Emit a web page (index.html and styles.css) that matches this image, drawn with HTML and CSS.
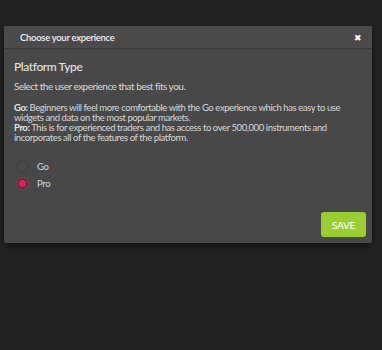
FILE: index.html
```html
<!DOCTYPE html>
<html>
<head>
<meta charset="utf-8">
<link rel="stylesheet" href="styles.css">
</head>
<body>
<div class="dialog">
  <div class="header">
    <span class="title">Choose your experience</span>
    <span class="close">✖</span>
  </div>
  <div class="body">
    <h2 class="heading">Platform Type</h2>
    <p class="intro">Select the user experience that best fits you.</p>
    <p class="desc"><b>Go:</b> Beginners will feel more comfortable with the Go experience which has easy to use widgets and data on the most popular markets.<br><b>Pro:</b> This is for experienced traders and has access to over 500,000 instruments and incorporates all of the features of the platform.</p>
    <div class="options">
      <label class="option"><span class="radio"></span><span>Go</span></label>
      <label class="option"><span class="radio checked"></span><span>Pro</span></label>
    </div>
    <div class="footer"><button class="save">SAVE</button></div>
  </div>
</div>
</body>
</html>
```
FILE: styles.css
```css
html, body { margin: 0; padding: 0; }
body {
  background: #232323;
  width: 382px;
  height: 350px;
  font-family: Lato, "Liberation Sans", sans-serif;
  color: #d8d8d8;
  padding-top: 26px;
  box-sizing: border-box;
}
.dialog {
  margin-left: 4px;
  width: 368px;
  background: #484848;
  box-shadow: 0 3px 8px rgba(0,0,0,0.5);
  border-radius: 2px;
}
.header {
  height: 22px;
  border-bottom: 1px solid #3a3a3a;
  display: flex;
  align-items: center;
  justify-content: space-between;
  padding: 0 10px 0 16px;
  background: #4a4a4a;
}
.title {
  font-size: 9.5px;
  letter-spacing: -0.3px;
  font-weight: 600;
  color: #f0f0f0;
}
.close {
  font-size: 9px;
  color: #fff;
}
.body {
  padding: 10px 6px 6px 10px;
}
.heading {
  margin: 0;
  font-size: 12px;
  letter-spacing: -0.4px;
  font-weight: 500;
  color: #e2e2e2;
  line-height: 16px;
}
.intro {
  margin: 5px 0 0;
  font-size: 10px;
  letter-spacing: -0.5px;
  line-height: 12px;
}
.desc {
  margin: 11px 4px 0 0;
  font-size: 9.5px;
  letter-spacing: -0.42px;
  line-height: 10px;
}
.desc b { font-weight: 700; color: #e6e6e6; }
.options {
  margin-top: 17px;
  display: flex;
  flex-direction: column;
  gap: 4px;
}
.option {
  display: flex;
  align-items: center;
  gap: 8px;
  font-size: 9.5px;
  letter-spacing: -0.3px;
  height: 13px;
  padding-left: 2px;
}
.radio {
  width: 11px;
  height: 11px;
  border: 1px solid #3c3c3c;
  border-radius: 50%;
  box-sizing: content-box;
  display: inline-block;
  position: relative;
}
.radio.checked {
  border-color: #c2244f;
  background: #3e3e3e;
}
.radio.checked::after {
  content: "";
  position: absolute;
  left: 2px; top: 2px;
  width: 7px; height: 7px;
  border-radius: 50%;
  background: #f0185a;
}
.footer {
  display: flex;
  justify-content: flex-end;
  margin-top: 22px;
}
.save {
  background: #9acd32;
  border: none;
  border-radius: 3px;
  color: #fff;
  font-family: inherit;
  font-size: 10px;
  letter-spacing: -0.3px;
  width: 45px;
  height: 25px;
  padding: 0;
}
```
